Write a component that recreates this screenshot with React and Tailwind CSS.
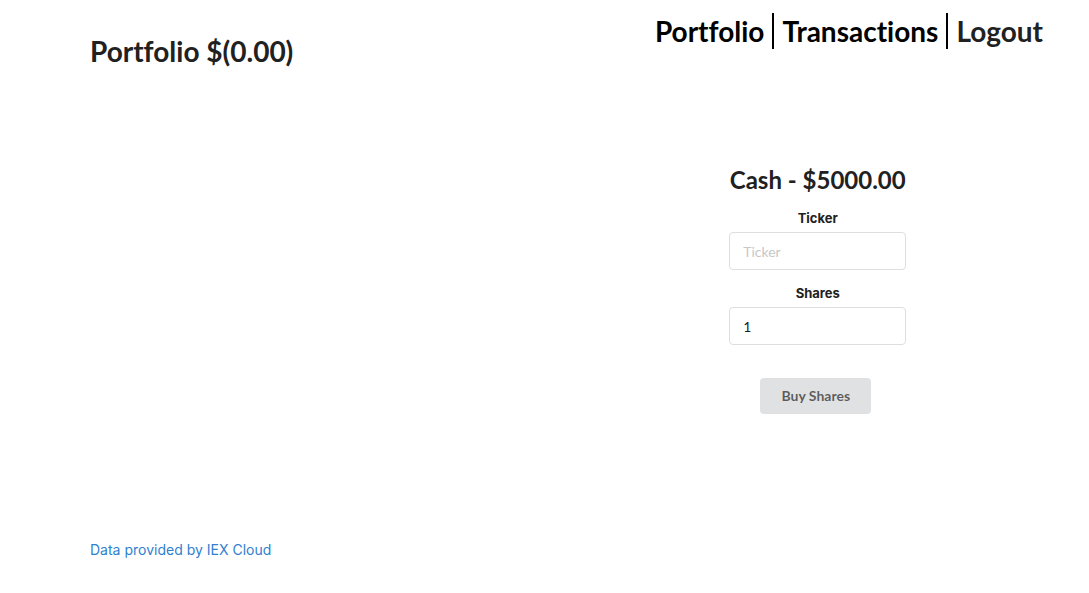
const field =
  "mt-[5px] h-[38px] w-full rounded border border-[#dededf] bg-white px-[13px] font-[Lato,sans-serif] text-sm text-black/90 outline-none placeholder:text-[#c7c7c7]";
const label = "text-[13px] leading-[18px] font-bold text-[#212121]";

export default function App() {
  return (
    <div className="flex min-h-screen flex-col bg-white font-[Lato,sans-serif] text-[#212121] [font-variant-ligatures:none]">
      <header className="flex items-start justify-between pr-[46px] pl-[90px]">
        <h1 className="pt-[33px] text-[28px] leading-9 font-bold">Portfolio $(0.00)</h1>
        <nav className="flex pt-[13px] text-[28px] leading-9 font-bold">
          <a href="#portfolio" className="border-r-2 border-black pr-2 text-black">Portfolio</a>
          <a href="#transactions" className="border-r-2 border-black px-2 text-black">Transactions</a>
          <a href="#logout" className="pl-2">Logout</a>
        </nav>
      </header>
      <main className="grid grow grid-cols-2">
        <section aria-label="Holdings" />
        <section className="flex flex-col items-center pt-24 pl-[2px]">
          <h2 className="text-2xl leading-[30px] font-bold">Cash - $5000.00</h2>
          <form className="mt-[14px] flex w-[177px] flex-col items-center font-[Inter,sans-serif]">
            <label htmlFor="ticker" className={label}>Ticker</label>
            <input id="ticker" type="text" placeholder="Ticker" className={field} />
            <label htmlFor="shares" className={"mt-[14px] " + label}>Shares</label>
            <input id="shares" type="text" inputMode="numeric" defaultValue="1" className={field} />
            <button type="button" className="mt-[33px] mr-1 h-9 rounded bg-[#e0e1e2] px-[21px] font-[Lato,sans-serif] text-sm font-bold text-black/60">Buy Shares</button>
          </form>
        </section>
      </main>
      <footer className="pb-[33px] pl-[90px] font-[Inter,sans-serif] text-sm leading-5">
        <a href="https://iexcloud.io" className="text-[#2f80cf]">Data provided by IEX Cloud</a>
      </footer>
    </div>
  );
}
